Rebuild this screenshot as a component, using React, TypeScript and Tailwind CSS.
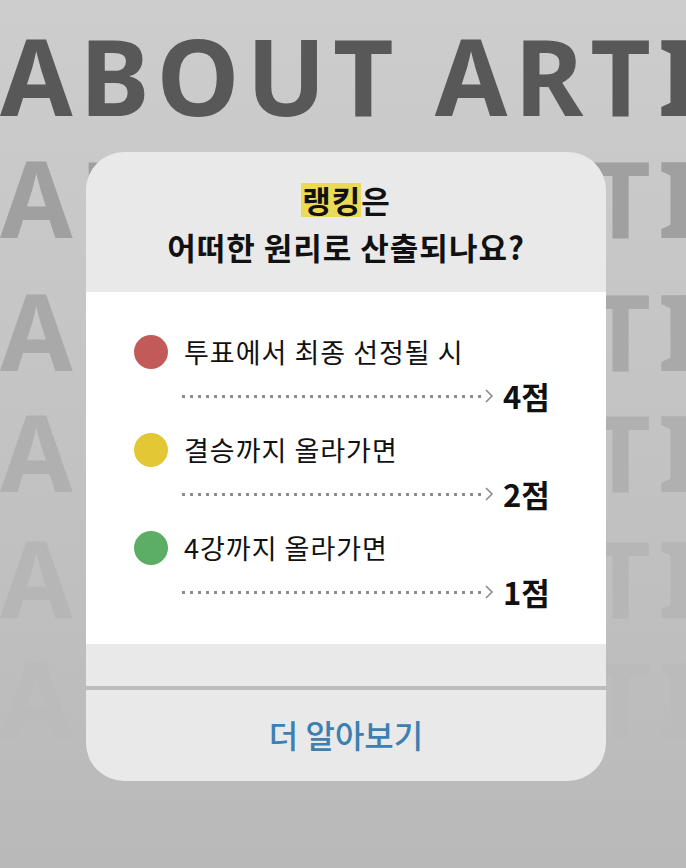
import React from "react";

const rows = [
  { color: "text-[#585858]", mt: "mt-[37px]" },
  { color: "text-[#a0a0a0]", mt: "mt-[46px]" },
  { color: "text-[#a9a9a9]", mt: "mt-[57px]" },
  { color: "text-[#b0b0b0]", mt: "mt-[45px]" },
  { color: "text-[#b6b6b6]", mt: "mt-[50px]" },
  { color: "text-[#bbbbbb]", mt: "mt-[45px]" },
];

const items = [
  { dot: "bg-[#c25a5a]", label: "투표에서 최종 선정될 시", score: "4점" },
  { dot: "bg-[#e3c734]", label: "결승까지 올라가면", score: "2점" },
  { dot: "bg-[#5cad66]", label: "4강까지 올라가면", score: "1점" },
];

const Leader = () => (
  <div className="flex items-center">
    <div className="h-[3px] w-[302px] bg-[repeating-linear-gradient(90deg,#8c8c8c_0_3px,transparent_3px_8px)]" />
    <svg width="10" height="16" viewBox="0 0 10 16">
      <path d="M2 2 L8 8 L2 14" fill="none" stroke="#8c8c8c" strokeWidth="1.6" />
    </svg>
  </div>
);

const App: React.FC = () => {
  return (
    <div className="relative w-[686px] h-[868px] overflow-hidden bg-gradient-to-b from-[#cdcdcd] to-[#b9b9b9] font-['Noto_Sans','Noto_Sans_CJK_KR',sans-serif]">
      {/* background title rows */}
      <div className="flex flex-col">
        {rows.map((r, i) => (
          <div
            key={i}
            className={`${r.mt} ${r.color} whitespace-nowrap text-[105px] leading-[76px] font-bold tracking-[7px] h-[76px] pt-[1px]`}
          >
            ABOUT ARTIST
          </div>
        ))}
      </div>

      {/* modal */}
      <div className="absolute left-[86px] top-[152px] w-[520px] h-[629px] rounded-[38px] overflow-hidden bg-[#e9e9e9] flex flex-col font-['Noto_Sans_CJK_KR',sans-serif] text-[#111]">
        <div className="h-[140px] flex flex-col items-center pt-[24px] text-[31px] font-bold tracking-[1px] leading-[47px]">
          <div className="flex items-center h-[47px]">
            <span className="inline-block bg-[#ecd955] h-[34px] leading-[34px] pl-[1px]">랭킹</span>
            <span>은</span>
          </div>
          <div>어떠한 원리로 산출되나요?</div>
        </div>
        <div className="h-[352px] bg-white flex flex-col pl-[48px] pt-[41px] gap-[10px]">
          {items.map((it) => (
            <div key={it.label} className="flex flex-col">
              <div className="flex items-center h-[38px]">
                <div className={`w-[34px] h-[34px] rounded-full ${it.dot}`} />
                <div className="ml-[16px] text-[27px] tracking-[1px] leading-[38px]">{it.label}</div>
              </div>
              <div className="flex items-center h-[50px] pl-[48px]">
                <Leader />
                <div className="ml-[9px] text-[31px] font-bold leading-[40px]">{it.score}</div>
              </div>
            </div>
          ))}
        </div>
        <div className="h-[42px]" />
        <div className="h-[4px] bg-[#bdbdbd]" />
        <div className="flex-1 flex items-center justify-center text-[32px] font-medium text-[#3d7fb0] pb-[4px]">
          더 알아보기
        </div>
      </div>
    </div>
  );
};

export default App;
